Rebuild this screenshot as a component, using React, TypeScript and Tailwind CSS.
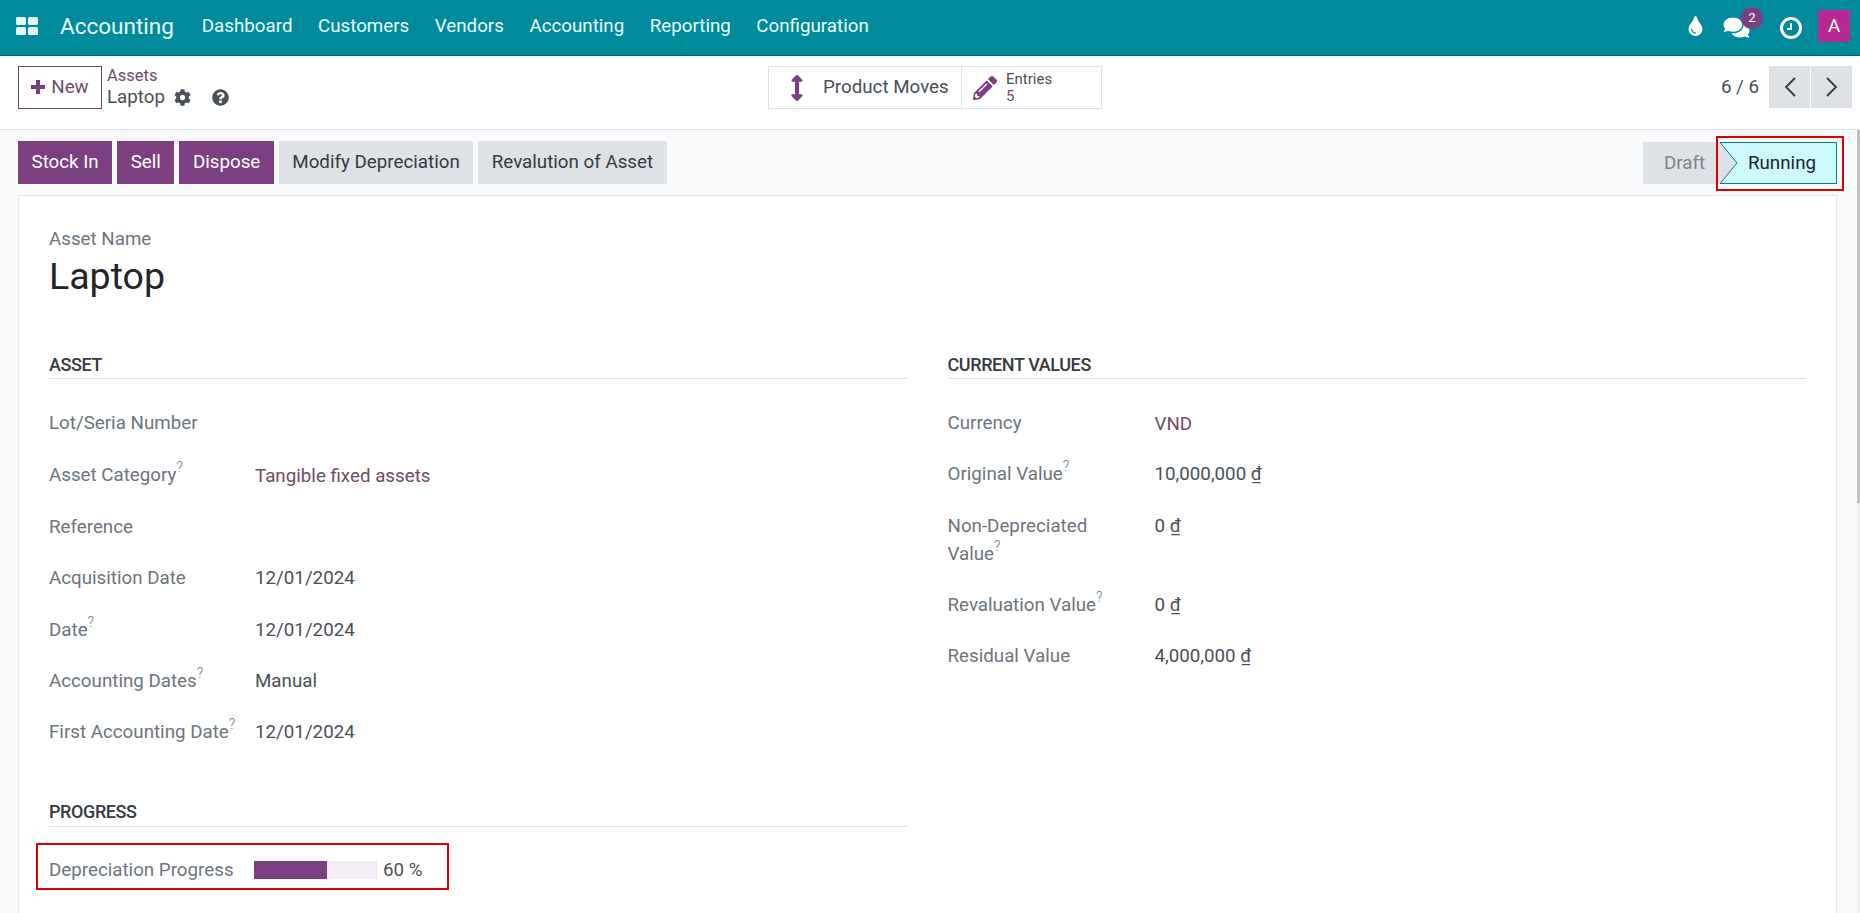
import { ReactNode } from 'react';
import { FaTint, FaComments, FaCog, FaQuestionCircle, FaPencilAlt, FaArrowsAltV } from 'react-icons/fa';

const menu = ['Dashboard', 'Customers', 'Vendors', 'Accounting', 'Reporting', 'Configuration'];

function Hint() {
  return <sup className="text-[14px] font-light -top-[9px] text-[#6c757d]">?</sup>;
}

function Field({
  label,
  hint,
  children,
  tall,
  right,
}: {
  label: ReactNode;
  hint?: boolean;
  children?: ReactNode;
  tall?: boolean;
  right?: boolean;
}) {
  return (
    <div className={`flex pt-[12px] leading-[28px] ${tall ? 'h-[79px]' : 'h-[51.4px]'}`}>
      <div className={`shrink-0 text-[#6c757d] ${right ? 'w-[207px]' : 'w-[206px]'}`}>
        {label}
        {hint && <Hint />}
      </div>
      <div className="text-[#495057]">{children}</div>
    </div>
  );
}

function Section({ title }: { title: string }) {
  return (
    <div className="border-b border-[#dee2e6] h-[27px] leading-[26px] text-[18px] font-medium tracking-[-0.4px] text-[#343a40] uppercase">
      {title}
    </div>
  );
}

function Link({ children }: { children: ReactNode }) {
  return <span className="text-[#714b67] relative top-[1px]">{children}</span>;
}

export default function App() {
  return (
    <div className="relative w-[1860px] h-[913px] overflow-hidden bg-[#f9fafb] font-['Roboto',sans-serif] text-[18.75px] text-[#495057]">
      {/* navbar */}
      <nav className="flex items-center h-[56px] border-b border-[#00636e] bg-[#008b9c] text-[#e8fbfd]">
        <svg viewBox="0 0 22 18" className="w-[22px] h-[18px] ml-[16px] -mt-[4px] shrink-0" fill="#e4f6f8">
          <rect x="0" y="0" width="10" height="8" rx="1.5" />
          <rect x="12" y="0" width="10" height="8" rx="1.5" />
          <rect x="0" y="10" width="10" height="8" rx="1.5" />
          <rect x="12" y="10" width="10" height="8" rx="1.5" />
        </svg>
        <span className="ml-[22px] text-[22.5px] mr-[28px] -mt-[2px]">Accounting</span>
        <div className="flex gap-[25.5px] -mt-[2px]">
          {menu.map((item) => (
            <span key={item}>{item}</span>
          ))}
        </div>
        <div className="ml-auto flex items-center mr-[10px]">
          <FaTint className="text-white w-[17px] h-[20px] -mt-[3px]" />
          <div className="relative ml-[19px]">
            <FaComments className="text-white w-[27px] h-[23px]" />
            <span className="absolute -top-[9px] left-[18px] w-[22px] h-[22px] rounded-full bg-[#7c3f81] text-white text-[13px] leading-[22px] text-center">
              2
            </span>
          </div>
          <svg viewBox="0 0 22 22" className="w-[22px] h-[22px] ml-[30px]" fill="none" stroke="#fff">
            <circle cx="11" cy="11" r="9.5" strokeWidth="3" />
            <path d="M11 6v6H7" strokeWidth="2" />
          </svg>
          <span className="ml-[16px] w-[32px] h-[32px] rounded-[2px] bg-[#b72a94] text-white text-center leading-[32px] -mt-[3px]">
            A
          </span>
        </div>
      </nav>

      {/* control panel */}
      <div className="flex items-start h-[74px] pt-[10px] pl-[18px] pr-[8px] bg-white border-b border-[#dee2e6]">
        <div className="flex w-[750px] shrink-0">
          <button className="flex items-center justify-center gap-[6px] w-[84px] h-[43px] pb-[1px] border border-[#714b67] text-[#714b67]">
            <svg viewBox="0 0 14 14" className="w-[14px] h-[14px]" fill="#7c4082">
              <path d="M5 0h4v5h5v4H9v5H5V9H0V5h5z" />
            </svg>
            New
          </button>
          <div className="ml-[5px]">
            <div className="text-[16.5px] leading-[20px] text-[#714b67]">Assets</div>
            <div className="flex items-center leading-[24px] -mt-[1px]">
              Laptop
              <FaCog className="w-[17px] h-[17px] ml-[9px] text-[#495057]" />
              <FaQuestionCircle className="w-[17px] h-[17px] ml-[21px] text-[#495057]" />
            </div>
          </div>
        </div>
        <div className="flex h-[43px] border border-[#dee2e6]">
          <div className="flex items-center w-[193px] border-r border-[#dee2e6]">
            <FaArrowsAltV className="w-[22px] h-[26px] ml-[17px] text-[#7c4082]" />
            <span className="ml-[15px]">Product Moves</span>
          </div>
          <div className="flex items-center w-[139px]">
            <FaPencilAlt className="w-[24px] h-[24px] ml-[11px] text-[#7c4082]" />
            <div className="ml-[9px] text-[15px] leading-[17px]">
              <div>Entries</div>
              <div className="text-[#7c4082]">5</div>
            </div>
          </div>
        </div>
        <div className="ml-auto flex items-center h-[42px]">
          <span className="mr-[10px]">6 / 6</span>
          <div className="flex gap-[1px]">
            <button className="flex items-center justify-center w-[41px] h-[42px] bg-[#dee2e6]">
              <svg viewBox="0 0 14 22" className="w-[14px] h-[22px]" fill="none" stroke="#343a40" strokeWidth="1.8">
                <path d="M12 2 3 11l9 9" />
              </svg>
            </button>
            <button className="flex items-center justify-center w-[41px] h-[42px] bg-[#dee2e6]">
              <svg viewBox="0 0 14 22" className="w-[14px] h-[22px]" fill="none" stroke="#343a40" strokeWidth="1.8">
                <path d="M2 2l9 9-9 9" />
              </svg>
            </button>
          </div>
        </div>
      </div>

      {/* status bar */}
      <div className="relative flex items-start h-[65px] pt-[11px] pl-[18px] pr-[23px]">
        <div className="flex gap-[5px]">
          {['Stock In', 'Sell', 'Dispose'].map((label) => (
            <button key={label} className="h-[43px] px-[13.5px] pb-[1px] bg-[#7c4082] text-white">
              {label}
            </button>
          ))}
          {['Modify Depreciation', 'Revalution of Asset'].map((label) => (
            <button key={label} className="h-[43px] px-[13.5px] pb-[1px] bg-[#dee2e6] text-[#343a40]">
              {label}
            </button>
          ))}
        </div>
        <div className="ml-auto flex h-[42px] mt-[1px]">
          <div className="w-[77px] bg-[#dee2e6] text-[#7c848b] text-center leading-[42px] pl-[6px]">Draft</div>
          <div className="relative w-[117px] text-[#212529] text-center leading-[42px] pl-[7px]">
            <svg viewBox="0 0 117 42" className="absolute inset-0 w-[117px] h-[42px]">
              <path d="M0 0 17 21 0 42z" fill="#dee2e6" />
              <path d="M0 0.5 17 21 0 41.5h116.5V0.5z" fill="#ccfafd" stroke="#017e84" />
            </svg>
            <span className="relative">Running</span>
          </div>
        </div>
        <div className="absolute left-[1716px] top-[6px] w-[128px] h-[55px] border-2 border-[#d90000]" />
      </div>

      {/* form sheet */}
      <div className="ml-[18px] mr-[23px] h-[720px] bg-white border border-[#e5e7eb] pt-[29px] pl-[30px] pr-[30px]">
        <div className="leading-[28px] text-[#6c757d]">Asset Name</div>
        <div className="text-[37.5px] leading-[44px] mt-[1px] text-[#212529]">Laptop</div>
        <div className="grid grid-cols-2 gap-x-[40px] mt-[54px]">
          <div>
            <Section title="Asset" />
            <div className="mt-[18px]">
              <Field label="Lot/Seria Number" />
              <div className="mt-[1px]">
                <Field label="Asset Category" hint>
                  <Link>Tangible fixed assets</Link>
                </Field>
                <Field label="Reference" />
                <Field label="Acquisition Date">12/01/2024</Field>
                <Field label="Date" hint>
                  12/01/2024
                </Field>
                <Field label="Accounting Dates" hint>
                  Manual
                </Field>
                <Field label="First Accounting Date" hint>
                  12/01/2024
                </Field>
              </div>
            </div>
            <div className="mt-[40px] border-b border-[#dee2e6] h-[29px] leading-[27px] text-[18px] font-medium tracking-[-0.4px] text-[#343a40]">
              PROGRESS
            </div>
            <div className="relative flex items-center mt-[17px] h-[52px]">
              <div className="w-[205px] text-[#6c757d]">Depreciation Progress</div>
              <div className="w-[123px] h-[18px] bg-[#f4edf6] border-r border-[#e5e7eb]">
                <div className="w-[60%] h-full bg-[#7c4082]" />
              </div>
              <span className="ml-[6px]">60 %</span>
              <div className="absolute -left-[13px] -top-[1px] w-[413px] h-[47px] border-2 border-[#d90000]" />
            </div>
          </div>
          <div>
            <Section title="Current Values" />
            <div className="mt-[18px]">
              <Field right label="Currency">
                <Link>VND</Link>
              </Field>
              <Field right label="Original Value" hint>
                10,000,000 ₫
              </Field>
              <Field
                right
                tall
                label={
                  <>
                    Non-Depreciated
                    <br />
                    Value
                  </>
                }
                hint
              >
                0 ₫
              </Field>
              <Field right label="Revaluation Value" hint>
                0 ₫
              </Field>
              <Field right label="Residual Value">
                4,000,000 ₫
              </Field>
            </div>
          </div>
        </div>
      </div>

      {/* page scrollbar */}
      <div className="absolute right-0 top-[130px] w-[3px] h-[783px] bg-[#f1f1f1]">
        <div className="h-[373px] bg-[#c1c1c1]" />
      </div>
    </div>
  );
}
